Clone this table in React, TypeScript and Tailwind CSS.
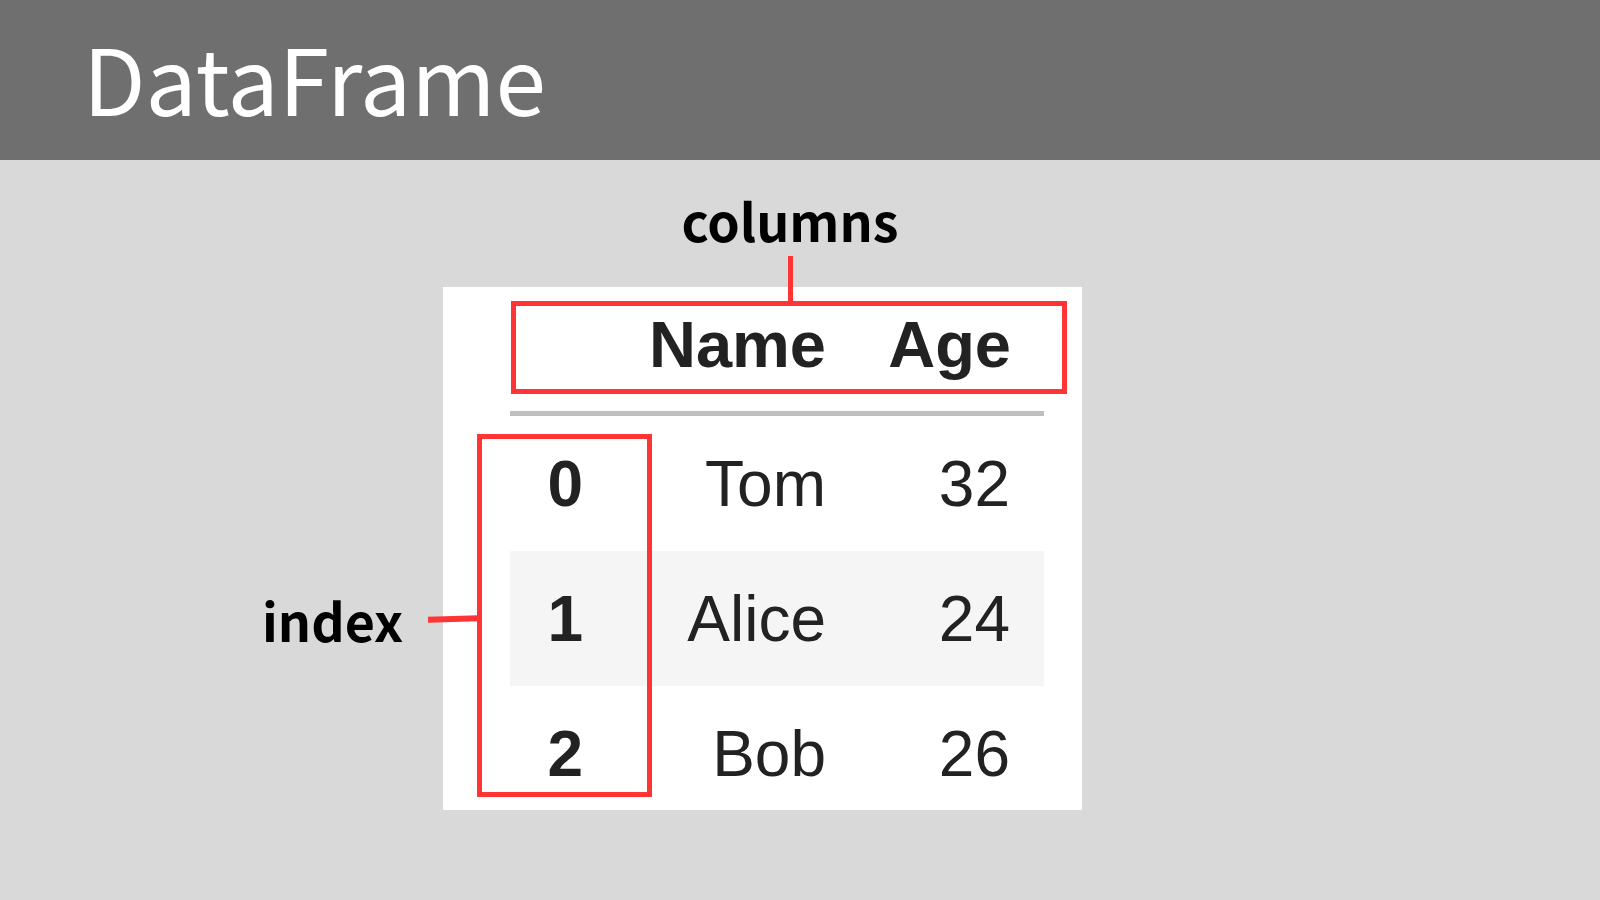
const ROWS = [
  { idx: "0", name: "Tom", age: "32" },
  { idx: "1", name: "Alice", age: "24" },
  { idx: "2", name: "Bob", age: "26" },
];

const sans = "font-['Noto_Sans_CJK_JP','Noto_Sans',sans-serif]";
const cellFont = "font-['Liberation_Sans',Arial,sans-serif]";

export default function App() {
  return (
    <div className="w-[1600px] h-[900px] bg-[#d9d9d9] overflow-hidden">
      {/* title bar */}
      <header className="h-[160px] bg-[#6f6f6f] pl-[83px] pt-[31px]">
        <h1 className={`${sans} text-[91px] leading-none font-normal text-white`}>DataFrame</h1>
      </header>

      <main className="pl-[443px]">
        <div className={`${sans} w-[639px] pl-[55px] mt-[34px] text-center text-[52px] leading-none font-bold text-black`}>
          columns
        </div>

        <div className="relative w-[639px] mt-[41px]">
          {/* table */}
          <div className={`${cellFont} h-[523px] bg-white overflow-hidden pt-[7px] pl-[67px] text-[#222222]`}>
            <div className="grid grid-cols-[106px_242px_186px] h-[100px] items-center text-[65px] leading-none font-bold">
              <div />
              <div className="text-right pr-[32px]">Name</div>
              <div className="text-right pr-[33px]">Age</div>
            </div>
            <div className="w-[534px] h-[5px] mt-[17px] bg-[#bfbfbf]" />
            {ROWS.map((row, i) => (
              <div
                key={row.idx}
                className={`grid grid-cols-[106px_242px_186px] w-[534px] h-[135px] items-center text-[64px] leading-none ${
                  i % 2 === 1 ? "bg-[#f5f5f5]" : ""
                }`}
              >
                <div className="text-right pr-[33px] font-bold">{row.idx}</div>
                <div className="text-right pr-[32px]">{row.name}</div>
                <div className="text-right pr-[34px]">{row.age}</div>
              </div>
            ))}
          </div>

          {/* annotations */}
          <div className="absolute left-[68px] top-[14px] w-[556px] h-[93px] border-[5px] border-[#ff3434]" />
          <div className="absolute left-[345px] top-[-31px] w-[5px] h-[45px] bg-[#ff3434]" />
          <div className="absolute left-[34px] top-[147px] w-[175px] h-[363px] border-[5px] border-[#ff3434]" />
          <div className="absolute left-[-15px] top-[329px] w-[50px] h-[6px] bg-[#ff3434] -rotate-2" />
          <span className={`${sans} absolute left-[-181px] top-[307px] text-[52px] leading-none font-bold text-black`}>
            index
          </span>
        </div>
      </main>
    </div>
  );
}
